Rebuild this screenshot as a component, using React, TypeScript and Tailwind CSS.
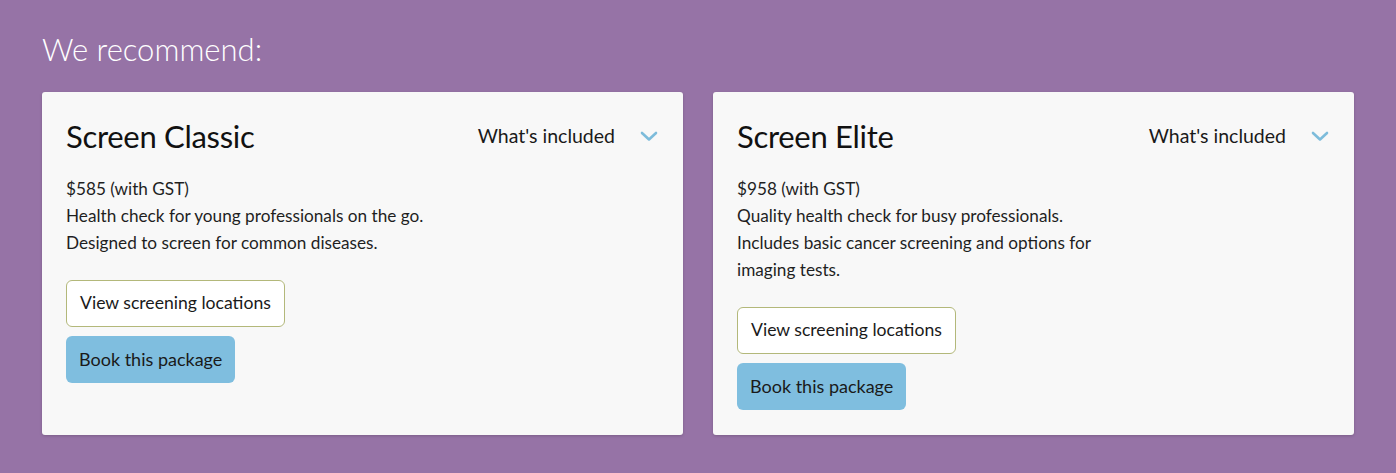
import React from "react";

function Chevron() {
  return (
    <svg width="18" height="11" viewBox="0 0 18 11" fill="none" className="shrink-0">
      <path d="M2 2 L9 8.5 L16 2" stroke="#7dbcdb" strokeWidth="2.6" strokeLinecap="round" strokeLinejoin="round" />
    </svg>
  );
}

type Pkg = { name: string; price: string; lines: string[] };

const pkgs: Pkg[] = [
  {
    name: "Screen Classic",
    price: "$585 (with GST)",
    lines: ["Health check for young professionals on the go.", "Designed to screen for common diseases."],
  },
  {
    name: "Screen Elite",
    price: "$958 (with GST)",
    lines: ["Quality health check for busy professionals.", "Includes basic cancer screening and options for imaging tests."],
  },
];

function Card({ p }: { p: Pkg }) {
  return (
    <div className="flex-1 bg-[#f8f8f8] rounded-[3px] shadow-[0_1px_3px_rgba(0,0,0,0.18)] pt-6 pb-[25px] pl-6 pr-[25px]">
      <div className="flex items-center justify-between h-10">
        <h2 className="text-[31px] leading-10 text-[#111] tracking-[-0.3px] font-normal">{p.name}</h2>
        <div className="flex items-center gap-[25px]">
          <span className="text-[19.5px] text-[#1a1a1a] font-normal">What's included</span>
          <Chevron />
        </div>
      </div>
      <div className="mt-[19px] text-[17.2px] leading-[27px] text-[#1f1f1f] font-normal max-w-[390px]">
        <p>{p.price}</p>
        {p.lines.map((l, i) => (
          <p key={i}>{l}</p>
        ))}
      </div>
      <div className="mt-6 flex flex-col items-start gap-[9px]">
        <button className="h-[47px] px-[13px] bg-white border border-[#b3b87a] rounded-[6px] text-[17.6px] text-[#1a1a1a] font-normal">
          View screening locations
        </button>
        <button className="h-[47px] px-[13px] bg-[#7fbedf] rounded-[6px] text-[18px] text-[#1a1a1a] font-normal">
          Book this package
        </button>
      </div>
    </div>
  );
}

export default function App() {
  return (
    <div className="w-[1396px] h-[473px] bg-[#9673a6] px-[42px] pt-[30px]" style={{ fontFamily: "Lato, 'Open Sans', sans-serif" }}>
      <h1 className="text-[31px] leading-[38px] text-white font-light">We recommend:</h1>
      <div className="mt-[24px] flex gap-[30px] items-stretch">
        {pkgs.map((p) => (
          <Card key={p.name} p={p} />
        ))}
      </div>
    </div>
  );
}
